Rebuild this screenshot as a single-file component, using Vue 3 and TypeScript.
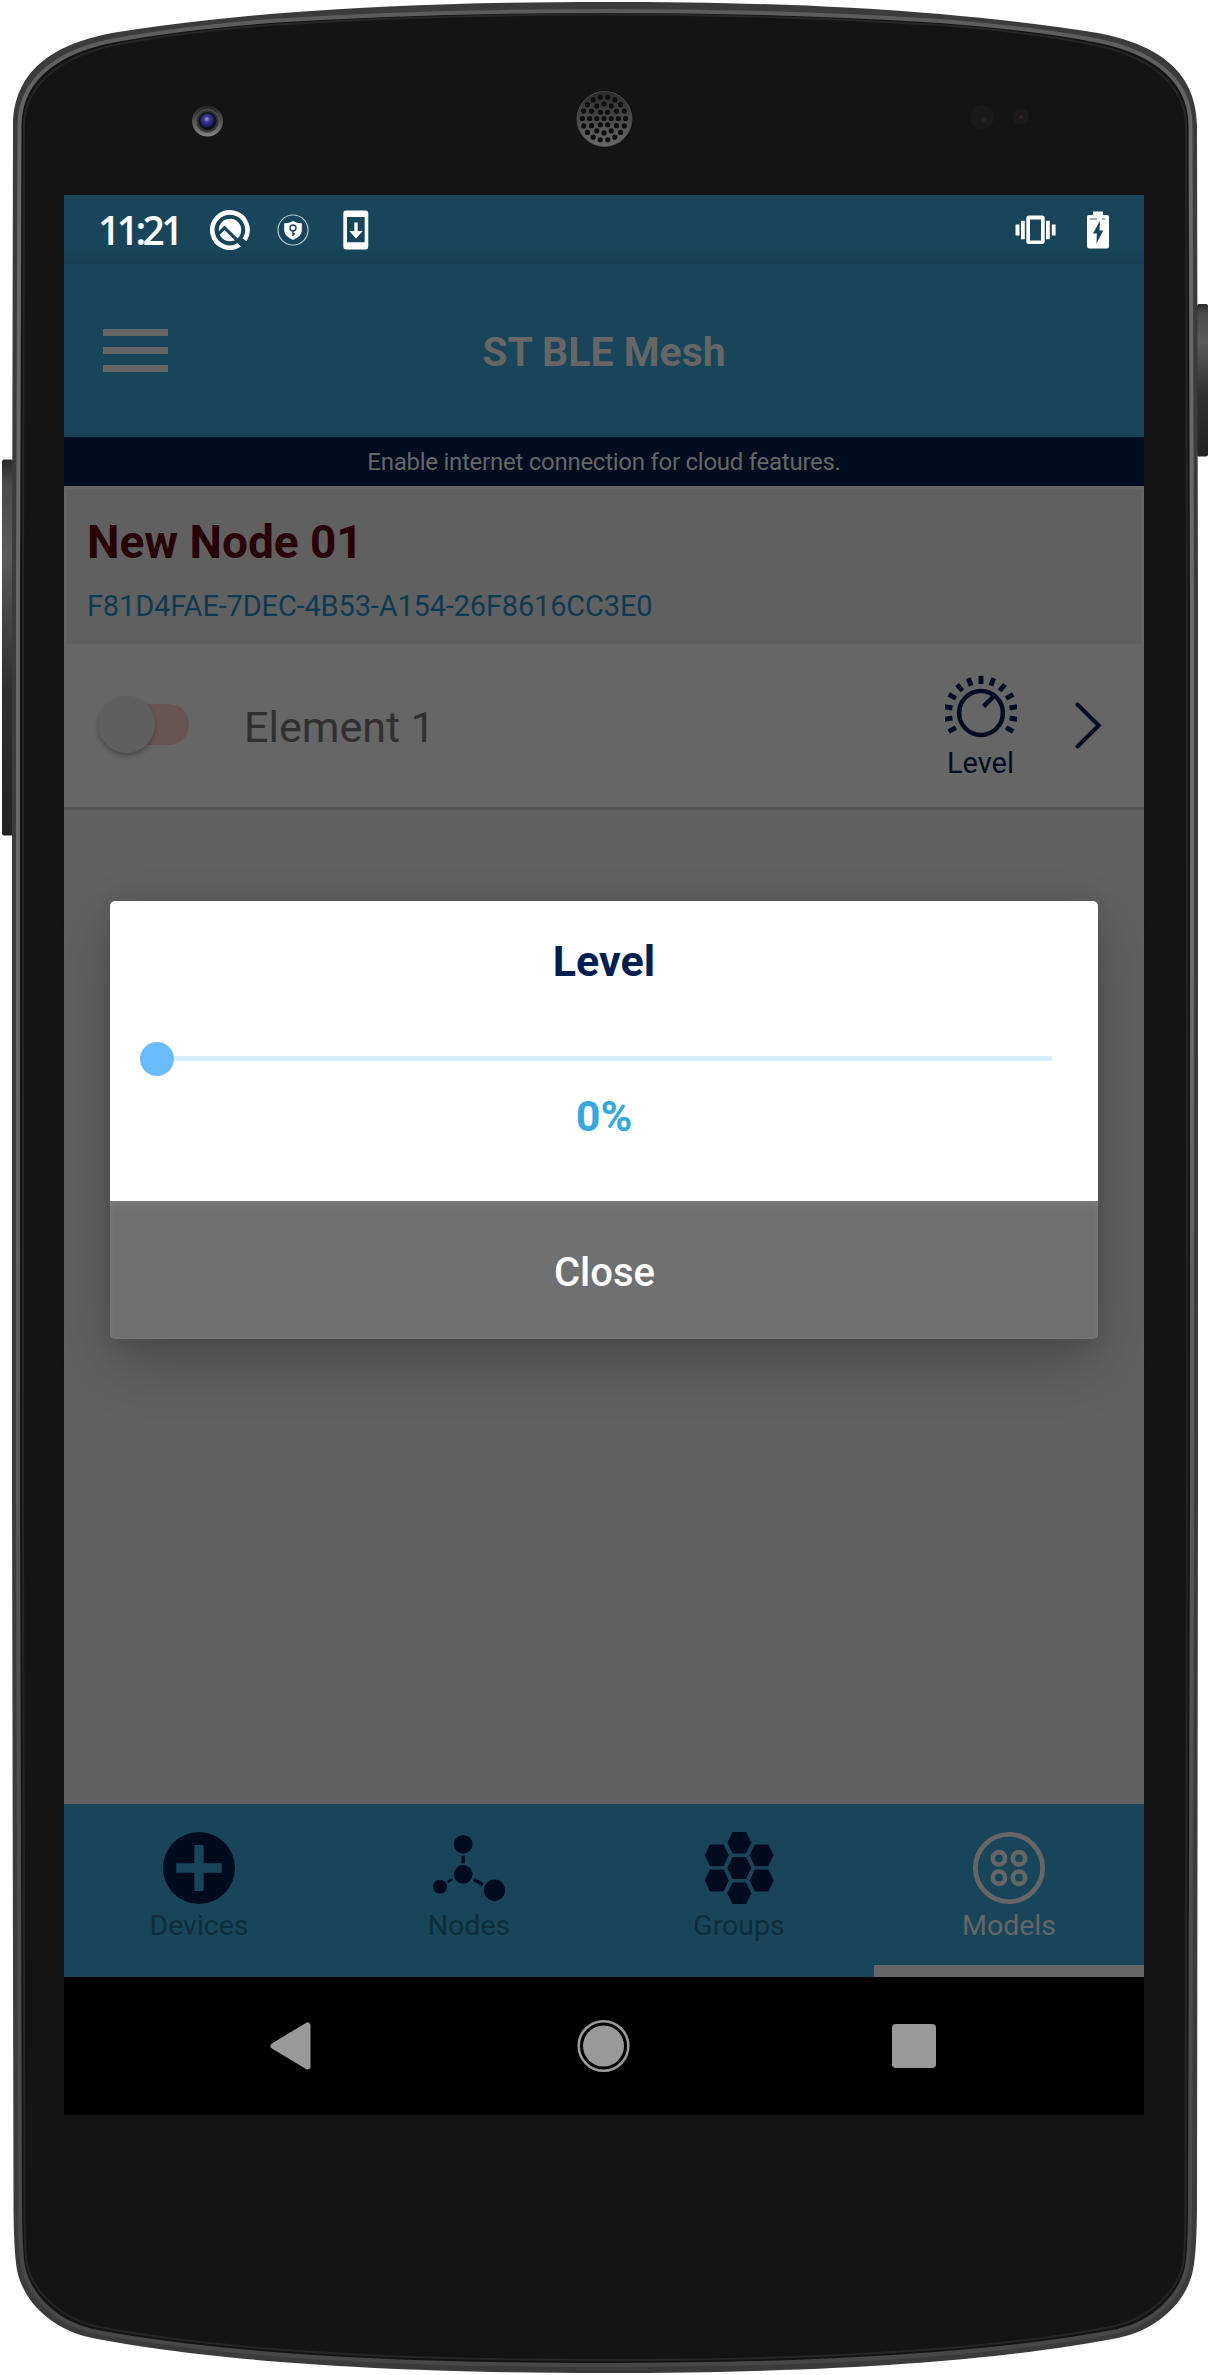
<script setup lang="ts">
interface Point {
  x: number
  y: number
}

interface Tab {
  id: string
  label: string
  active: boolean
}

const tabs: Tab[] = [
  { id: 'devices', label: 'Devices', active: false },
  { id: 'nodes', label: 'Nodes', active: false },
  { id: 'groups', label: 'Groups', active: false },
  { id: 'models', label: 'Models', active: true },
]

// Speaker perforation: concentric rings of holes
const holes: Point[] = [{ x: 604, y: 118.5 }]
for (let ring = 1; ring <= 3; ring++) {
  const count = ring * 6
  for (let i = 0; i < count; i++) {
    const a = (i / count) * Math.PI * 2
    holes.push({ x: 604 + Math.cos(a) * ring * 7.2, y: 118.5 + Math.sin(a) * ring * 7.2 })
  }
}

const ticks: number[] = Array.from({ length: 13 }, (_, i) => -120 + i * 20)

const hexCenters: Point[] = [
  { x: 36.3, y: 36 },
  { x: 36.3, y: 10.7 },
  { x: 36.3, y: 61.3 },
  { x: 13.8, y: 23.3 },
  { x: 13.8, y: 48.5 },
  { x: 58.6, y: 23.3 },
  { x: 58.6, y: 48.5 },
]

function hex(c: Point): string {
  return [[-12, 0], [-6.8, -10.9], [6.8, -10.9], [12, 0], [6.8, 10.9], [-6.8, 10.9]]
    .map(([dx, dy]) => `${c.x + dx},${c.y + dy}`)
    .join(' ')
}
</script>

<template>
  <div class="device">
    <svg class="frame" width="1210" height="2375" viewBox="0 0 1210 2375">
      <defs>
        <linearGradient id="side" x1="0" y1="0" x2="0" y2="1">
          <stop offset="0" stop-color="#2a2a2a" />
          <stop offset="0.06" stop-color="#4a4a4a" />
          <stop offset="0.25" stop-color="#5a5a5a" />
          <stop offset="0.6" stop-color="#303030" />
          <stop offset="1" stop-color="#222" />
        </linearGradient>
        <linearGradient id="rim" x1="0" y1="0" x2="0" y2="1">
          <stop offset="0" stop-color="#5c5c5d" />
          <stop offset="0.06" stop-color="#68686a" />
          <stop offset="0.4" stop-color="#6a6a6d" />
          <stop offset="0.8" stop-color="#4c4c4e" />
          <stop offset="1" stop-color="#484848" />
        </linearGradient>
        <linearGradient id="lensRing" x1="0" y1="0" x2="0" y2="1">
          <stop offset="0" stop-color="#222" />
          <stop offset="1" stop-color="#858585" />
        </linearGradient>
        <linearGradient id="grille" x1="0" y1="0" x2="0" y2="1">
          <stop offset="0" stop-color="#292929" />
          <stop offset="1" stop-color="#6a6a6a" />
        </linearGradient>
        <radialGradient id="lens" cx="0.45" cy="0.4" r="0.6">
          <stop offset="0" stop-color="#a9abc9" />
          <stop offset="0.35" stop-color="#3b3a8c" />
          <stop offset="1" stop-color="#141060" />
        </radialGradient>
      </defs>
      <rect x="2" y="459.5" width="11" height="376" rx="2" fill="url(#side)" />
      <rect x="1197" y="304" width="11" height="152.5" rx="2" fill="url(#side)" />
      <path
        d="M605 2C480 2 380 5 270 14Q180 22 112 33C60 43 14 66 13 125L12 600L12 1500L13.500 2200Q13.500 2250 17 2270C24 2304 54 2330 92 2338C190 2357 350 2373 605 2373S1020 2357 1118 2338C1156 2330 1186 2304 1193 2270Q1197 2250 1197 2200L1198 1500L1198 600L1197 125C1196 66 1150 43 1098 33Q1030 22 940 14C830 5 730 2 605 2Z"
        fill="#3b3b3c"
      />
      <path
        d="M605 11C480 11 380 14 270 21Q180 28 116 40C66 49 20 74 19.500 125L18 600L18 1500L20 2200Q20 2250 23 2267C30 2298 58 2323 92 2331C190 2350 350 2365 605 2365S1020 2350 1118 2331C1152 2323 1180 2298 1187 2267Q1190 2250 1190 2200L1192 1500L1192 600L1190.500 125C1190 74 1144 49 1094 40Q1030 28 940 21C830 14 730 11 605 11Z"
        fill="#141414"
        stroke="url(#rim)"
        stroke-width="4"
      />
      <path
        d="M605 14.500C480 14.500 380 18 270 25Q180 32 120 44C72 53 25 78 24 125L23 600L23 1500L24.500 2200Q24.500 2250 27 2265C34 2293 60 2317 94 2326C190 2345 350 2360 605 2360S1020 2345 1116 2326C1150 2317 1176 2293 1183 2265Q1185.500 2250 1185.500 2200L1187 1500L1187 600L1186 125C1185 78 1138 53 1090 44Q1030 32 940 25C830 18 730 14.500 605 14.500Z"
        fill="#141414"
        stroke="#262627"
        stroke-width="2"
      />
      <circle cx="207.500" cy="121" r="15.500" fill="url(#lensRing)" />
      <circle cx="207.500" cy="121" r="11.500" fill="#333" stroke="#555" />
      <circle cx="207.500" cy="121" r="9" fill="#111" />
      <circle cx="207.500" cy="120.500" r="7" fill="url(#lens)" />
      <circle cx="605" cy="119" r="28.500" fill="#0c0c0c" />
      <circle cx="604.500" cy="119" r="27.500" fill="url(#grille)" stroke="#4b4b4b" />
      <circle v-for="(h, i) in holes" :key="i" :cx="h.x" :cy="h.y" r="2.600" fill="#0d0d0d" />
      <circle cx="982" cy="117" r="12" fill="#1b1a1a" />
      <circle cx="984" cy="120" r="2.500" fill="#2b211d" />
      <circle cx="1021" cy="117" r="8" fill="#1c1a1a" />
      <circle cx="1021" cy="117" r="2" fill="#30231d" />
    </svg>

    <div class="screen">
      <div class="status">
        <span class="time">11:21</span>
        <svg class="st-q" width="40" height="40" viewBox="0 0 40 40">
          <path d="M29.700 34.700A17.600 17.600 0 1 1 34.500 29.900" fill="none" stroke="#fff" stroke-width="4.600" />
          <circle cx="20" cy="20" r="11.200" fill="#fff" />
          <path d="M7 25.500L14.500 17.800L34 37" fill="none" stroke="#184559" stroke-width="3.200" />
        </svg>
        <svg class="st-shield" width="32" height="32" viewBox="0 0 32 32">
          <circle cx="16" cy="16" r="15" fill="none" stroke="#b9c8cf" stroke-width="1.200" />
          <path d="M16 7Q20 9.500 24.800 9.300V17Q24 22.500 16 26Q8 22.500 7.200 17V9.300Q12 9.500 16 7Z" fill="#fff" />
          <circle cx="16" cy="14" r="3" fill="none" stroke="#184559" stroke-width="1.400" />
          <path d="M16 17V22M16 20H18" stroke="#184559" stroke-width="1.400" />
        </svg>
        <svg class="st-down" width="26" height="40" viewBox="0 0 26 40">
          <path fill-rule="evenodd" d="M3 .5H22.500Q25.300 .5 25.300 3.500V36.500Q25.300 39.500 22.500 39.500H3Q.3 39.500 .3 36.500V3.500Q.3 .5 3 .5ZM4 7V32.300H21.700V7Z" fill="#fff" />
          <path d="M11.300 12.500H14.700V21H19.700L13 28.600L6.300 21H11.300Z" fill="#fff" />
        </svg>
        <span class="grow"></span>
        <svg class="st-vib" width="42" height="30" viewBox="0 0 42 30">
          <path fill-rule="evenodd" d="M14 .5H27Q29.700 .5 29.700 3V26.500Q29.700 29 27 29H14Q11.300 29 11.300 26.500V3Q11.300 .5 14 .5ZM15 4.500V25.500H26V4.500Z" fill="#fff" />
          <path d="M.5 9.500H4.500V20.500H.5ZM6 5.700H9.800V24.200H6ZM31 5.700H34.800V24.200H31ZM36.800 9.500H40.600V20.500H36.800Z" fill="#fff" />
        </svg>
        <svg class="st-bat" width="22" height="38" viewBox="0 0 22 38">
          <path d="M6 .5H16V4H20Q22 4 22 6V35Q22 37.500 20 37.500H2Q0 37.500 0 35V6Q0 4 2 4H6Z" fill="#fff" />
          <path d="M3 8H10M15 8H18" stroke="#9cb0b9" stroke-width="1.800" />
          <path d="M13 9.500L6 22.500H9.800L9.500 32.500L16.300 19.500H12.500Z" fill="#184559" />
        </svg>
      </div>

      <header class="header">
        <div class="menu"><i></i><i></i><i></i></div>
        <h1>ST BLE Mesh</h1>
      </header>
      <div class="banner">Enable internet connection for cloud features.</div>

      <main class="content">
        <section class="node">
          <h2>New Node 01</h2>
          <p>F81D4FAE-7DEC-4B53-A154-26F8616CC3E0</p>
        </section>
        <section class="element">
          <div class="switch"><span class="thumb"></span></div>
          <span class="element-name">Element 1</span>
          <div class="level">
            <svg width="72" height="64" viewBox="-36 -38 72 64">
              <circle r="21.900" fill="none" stroke="#000c22" stroke-width="4.500" />
              <path d="M12.700-16.700L2.600-6.700" stroke="#000c22" stroke-width="4.500" />
              <path v-for="t in ticks" :key="t" d="M0-37.200V-29" :transform="`rotate(${t})`" stroke="#000c22" stroke-width="4.900" />
            </svg>
            <span>Level</span>
          </div>
          <svg class="chevron" width="28" height="48" viewBox="0 0 28 48">
            <path d="M3.500 2.500L24.700 23.500L3.500 44.500" fill="none" stroke="#000c22" stroke-width="4" stroke-linecap="round" />
          </svg>
        </section>
      </main>

      <nav class="tabs">
        <div v-for="tab in tabs" :key="tab.id" class="tab" :class="{ active: tab.active }">
          <svg width="72" height="72" viewBox="0 0 72 72">
            <template v-if="tab.id === 'devices'">
              <circle cx="36" cy="36" r="36" fill="#000b20" />
              <path d="M36 13V59M13.300 36H58.700" stroke="#184559" stroke-width="9.300" />
            </template>
            <template v-else-if="tab.id === 'nodes'">
              <g fill="#000b20">
                <circle cx="30.200" cy="12.200" r="9.300" />
                <circle cx="30.200" cy="42.300" r="9.300" />
                <circle cx="7" cy="54.700" r="7" />
                <circle cx="61.500" cy="58.300" r="10.700" />
              </g>
              <g stroke="#000b20">
                <path d="M30.200 23.700V31.500" stroke-width="3.600" />
                <path d="M19.500 47L14.500 50" stroke-width="2.200" />
                <path d="M40.700 47.300L49.700 52.700" stroke-width="3.400" />
              </g>
            </template>
            <template v-else-if="tab.id === 'groups'">
              <polygon v-for="(c, i) in hexCenters" :key="i" :points="hex(c)" fill="#000b20" />
            </template>
            <template v-else>
              <g fill="none" stroke="#666">
                <circle cx="36" cy="36" r="33.600" stroke-width="4.800" />
                <circle cx="26" cy="26.300" r="6.200" stroke-width="4.600" />
                <circle cx="46" cy="26.300" r="6.200" stroke-width="4.600" />
                <circle cx="26" cy="45.700" r="6.200" stroke-width="4.600" />
                <circle cx="46" cy="45.700" r="6.200" stroke-width="4.600" />
              </g>
            </template>
          </svg>
          <span>{{ tab.label }}</span>
        </div>
      </nav>

      <div class="navbar">
        <svg width="54" height="54" viewBox="0 0 54 54">
          <path d="M8.500 27L42.500 6.500V47.500Z" fill="#999" stroke="#999" stroke-width="6" stroke-linejoin="round" />
        </svg>
        <svg width="54" height="54" viewBox="0 0 54 54">
          <circle cx="27.500" cy="27" r="24.800" fill="none" stroke="#999" stroke-width="2.600" />
          <circle cx="27.500" cy="27" r="20.500" fill="#999" />
        </svg>
        <svg width="54" height="54" viewBox="0 0 54 54">
          <rect x="5" y="5" width="44" height="44" rx="4" fill="#999" />
        </svg>
      </div>

      <div class="dialog">
        <div class="dialog-body">
          <div class="dialog-title">Level</div>
          <div class="slider"><span class="knob"></span></div>
          <div class="value">0%</div>
        </div>
        <div class="close">Close</div>
      </div>
    </div>
  </div>
</template>

<style>
body {
  margin: 0;
  background: #fff;
}
</style>

<style scoped>
.device {
  position: relative;
  box-sizing: border-box;
  width: 1210px;
  height: 2375px;
  padding: 195px 66px 0 64px;
  overflow: hidden;
  font-family: Roboto, "Liberation Sans", sans-serif;
}
.frame {
  position: absolute;
  left: 0;
  top: 0;
}
.screen {
  position: relative;
  display: flex;
  flex-direction: column;
  width: 1080px;
  height: 1920px;
  background: #616161;
}
h1, h2, p {
  margin: 0;
}
.status {
  display: flex;
  align-items: center;
  box-sizing: border-box;
  height: 69px;
  padding: 0 35px 0 34px;
  background: linear-gradient(#184559 0, #184559 54px, #173f52 69px);
}
.time {
  width: 112px;
  font: 600 39px/68px "Open Sans", "Noto Sans", sans-serif;
  letter-spacing: -3.6px;
  color: #fff;
}
.st-shield { margin-left: 27px; }
.st-down { margin-left: 34px; }
.grow { flex: 1; }
.st-bat { margin-left: 30px; }
.header {
  display: grid;
  grid-template-columns: 104px 1fr 104px;
  align-items: center;
  height: 173px;
  background: #184559;
}
.menu {
  display: flex;
  flex-direction: column;
  gap: 11px;
  padding-left: 39px;
}
.menu i {
  height: 7px;
  background: #666;
}
.header h1 {
  padding-top: 3px;
  text-align: center;
  font-size: 41px;
  line-height: 60px;
  font-weight: 700;
  color: #666;
}
.banner {
  height: 49px;
  line-height: 51px;
  text-align: center;
  font-size: 24px;
  letter-spacing: -0.26px;
  color: #666;
  background: #000c1f;
}
.content {
  flex: 1;
}
.node {
  box-sizing: border-box;
  height: 158px;
  padding: 22px 22px 0 20px;
  border: 3px solid #666;
  border-bottom: 0;
  background: #606060;
}
.node h2 {
  font-size: 46px;
  line-height: 62px;
  font-weight: 700;
  color: #280007;
}
.node p {
  margin-top: 13px;
  font-size: 29px;
  line-height: 40px;
  letter-spacing: -0.16px;
  color: #0d3a50;
}
.element {
  display: flex;
  align-items: center;
  box-sizing: border-box;
  height: 166px;
  padding: 0 42px 0 44px;
  background: #666;
  border-bottom: 3px solid #545454;
}
.switch {
  box-sizing: border-box;
  width: 81px;
  height: 41px;
  margin-top: -2px;
  background: #675553;
  border-radius: 20px;
}
.thumb {
  display: block;
  position: relative;
  top: -8px;
  left: -10px;
  width: 57px;
  height: 57px;
  border-radius: 50%;
  background: #5f5f5f;
  box-shadow: 0 3px 4px rgba(0, 0, 0, 0.28);
}
.element-name {
  flex: 1;
  margin-left: 55px;
  font-size: 43px;
  line-height: 60px;
  padding-top: 2px;
  color: #303030;
}
.level {
  display: flex;
  flex-direction: column;
  align-items: center;
  width: 72px;
  margin-right: 57px;
  padding-top: 3px;
}
.level span {
  margin: 7px 1px 0 0;
  font-size: 29px;
  line-height: 34px;
  color: #000c22;
}
.level svg, .chevron, .tab svg, .status svg {
  display: block;
}
.tabs {
  display: flex;
  height: 173px;
  background: #184559;
}
.tab {
  display: flex;
  flex: 1;
  flex-direction: column;
  align-items: center;
  box-sizing: border-box;
  padding-top: 28px;
  font-size: 28.5px;
  line-height: 40px;
  color: #0e2c3a;
}
.tab span {
  margin: 2px 0 0 0;
}
.tab.active {
  color: #666;
  border-bottom: 12px solid #666;
}
.navbar {
  display: flex;
  justify-content: space-between;
  align-items: center;
  height: 138px;
  padding: 0 203px 0 201px;
  background: #000;
}
.dialog {
  position: absolute;
  left: 46px;
  top: 706px;
  width: 988px;
  height: 438px;
  border-radius: 5px;
  overflow: hidden;
  box-shadow: 0 24px 56px rgba(0, 0, 0, 0.24), 0 0 18px rgba(0, 0, 0, 0.1);
}
.dialog-body {
  box-sizing: border-box;
  height: 300px;
  padding-top: 30px;
  background: #fff;
  text-align: center;
}
.dialog-title {
  font-size: 43px;
  line-height: 60px;
  font-weight: 700;
  color: #001f50;
}
.slider {
  display: flex;
  align-items: center;
  height: 5px;
  margin: 65px 46px 0 30px;
  background: #d8edff;
}
.knob {
  width: 34px;
  height: 34px;
  margin-top: 1px;
  border-radius: 50%;
  background: #6bbcff;
}
.value {
  margin-top: 25px;
  font-size: 43px;
  line-height: 60px;
  font-weight: 700;
  color: #36a8de;
}
.close {
  height: 138px;
  padding-left: 1px;
  line-height: 144px;
  text-align: center;
  font-size: 40px;
  font-weight: 500;
  color: #fff;
  background: #707070;
  box-shadow: inset 0 6px 8px -2px rgba(130, 130, 130, 0.7), inset 0 0 5px rgba(130, 130, 130, 0.6);
}
</style>
